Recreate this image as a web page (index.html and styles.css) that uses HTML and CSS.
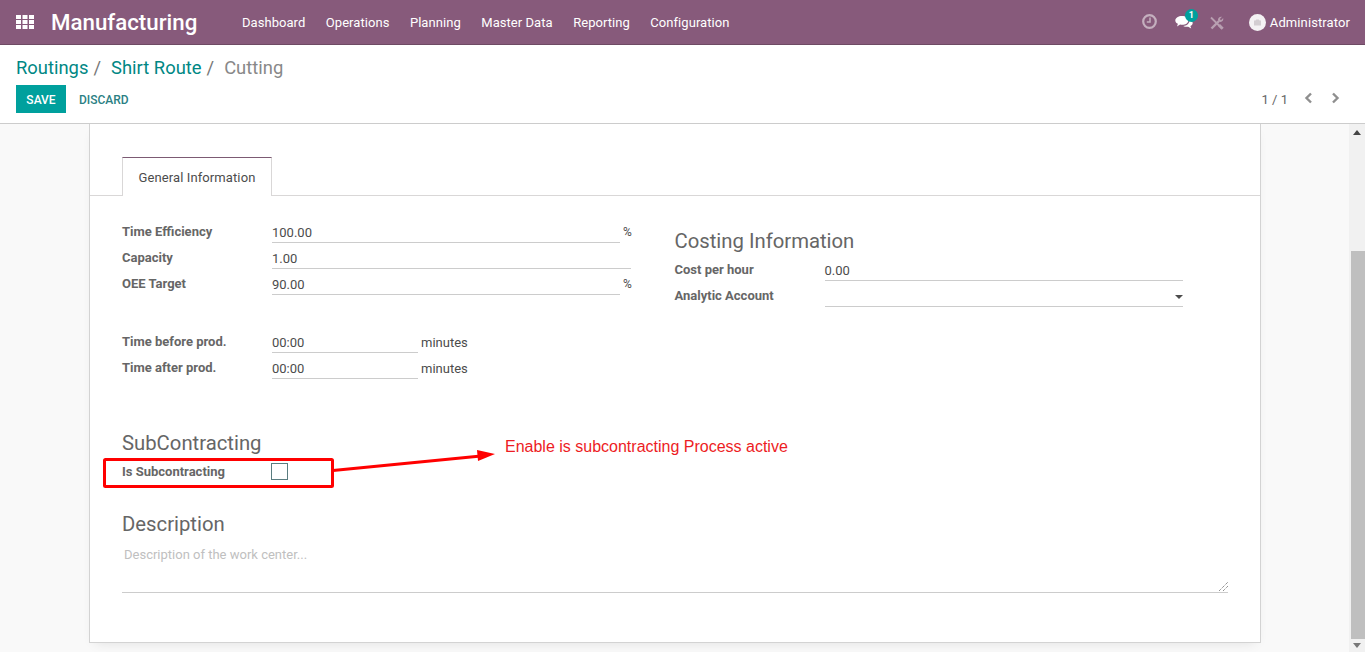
FILE: index.html
```html
<!DOCTYPE html>
<html>
<head>
<title>Cutting - Manufacturing</title>
<link rel="stylesheet" href="styles.css">
</head>
<body>
<nav class="topbar">
  <svg class="apps" width="18" height="14" viewBox="0 0 18 14"><path d="M0 0h5v4H0zM6.500 0h5v4h-5zM13 0h5v4h-5zM0 5h5v4H0zM6.500 5h5v4h-5zM13 5h5v4h-5zM0 10h5v4H0zM6.500 10h5v4h-5zM13 10h5v4h-5z"/></svg>
  <span class="brand">Manufacturing</span>
  <ul class="menu">
    <li>Dashboard</li>
    <li>Operations</li>
    <li>Planning</li>
    <li>Master Data</li>
    <li>Reporting</li>
    <li>Configuration</li>
  </ul>
  <div class="systray">
    <svg class="tray-clock" width="15" height="15" viewBox="0 0 15 15"><circle cx="7.500" cy="7.500" r="6.300" fill="none" stroke="#c4afbe" stroke-width="2.200"/><path d="M8 3.500v4.500H4.800" fill="none" stroke="#c4afbe" stroke-width="1.500"/></svg>
    <span class="tray-chat">
      <svg width="18" height="15" viewBox="0 0 18 15"><path d="M7 1c3.600 0 6.300 1.900 6.300 4.400S10.600 9.800 7 9.800c-.7 0-1.300 0-1.900-.2L2 11.500l.9-2.700C1.300 8 .3 6.800.3 5.400.3 2.900 3.400 1 7 1z" fill="#fff"/><path d="M14.500 4.500c1.900.7 3.200 2 3.200 3.500 0 1.300-.9 2.400-2.300 3.100l.8 2.400-3-1.700c-1.800.2-3.700-.1-5-.9 3.500 0 6.600-2.300 6.300-6.400z" fill="#fff"/></svg>
      <b class="badge">1</b>
    </span>
    <svg class="tray-tools" width="14" height="14" viewBox="0 0 14 14"><path d="M1.500 12.500 9 5" stroke="#b89fb1" stroke-width="2.400" fill="none"/><path d="M8 3.500C8.200 1.500 10 .3 12 .8L9.800 3l1.200 1.200 2.200-2.200c.5 2-.7 3.800-2.700 4-1.400.1-2.600-1.100-2.500-2.500z" fill="#b89fb1"/><path d="M1 1.500 12 12.500" stroke="#b89fb1" stroke-width="1.800" fill="none"/><path d="M8 10l2-2 3.700 3.700-2 2z" fill="#b89fb1"/></svg>
    <span class="user">
      <svg width="17" height="17" viewBox="0 0 17 17"><circle cx="8.500" cy="8.500" r="8.500" fill="#f4f1f3"/><path d="M5 6.500h1.500l.8-1h2.400l.8 1H12v5H5z" fill="#d3cdd1"/></svg>
      Administrator
    </span>
  </div>
</nav>

<header class="panel">
  <ol class="crumbs">
    <li><a>Routings</a><span class="sep">/</span></li>
    <li><a>Shirt Route</a><span class="sep">/</span></li>
    <li class="current">Cutting</li>
  </ol>
  <div class="panel-row">
    <button class="btn-save">SAVE</button>
    <button class="btn-discard">DISCARD</button>
    <div class="pager">
      <span class="pager-count">1 / 1</span>
      <svg width="9" height="12" viewBox="0 0 9 12"><path d="M7 1.500 2.500 6 7 10.500" fill="none" stroke="#8f8f8f" stroke-width="2.400"/></svg>
      <svg width="9" height="12" viewBox="0 0 9 12"><path d="M2 1.500 6.500 6 2 10.500" fill="none" stroke="#8f8f8f" stroke-width="2.400"/></svg>
    </div>
  </div>
</header>

<div class="content">
  <main class="scroller">
    <section class="sheet">
      <div class="tabs"><span class="tab">General Information</span></div>

      <div class="columns">
        <div>
          <div class="field"><label>Time Efficiency</label><span class="input short">100.00</span><span class="unit pct">%</span></div>
          <div class="field"><label>Capacity</label><span class="input wide">1.00</span></div>
          <div class="field"><label>OEE Target</label><span class="input short">90.00</span><span class="unit pct">%</span></div>
          <div class="field first-time"><label>Time before prod.</label><span class="input time">00:00</span><span class="unit">minutes</span></div>
          <div class="field"><label>Time after prod.</label><span class="input time">00:00</span><span class="unit">minutes</span></div>
        </div>
        <div>
          <h2 class="costing">Costing Information</h2>
          <div class="field"><label>Cost per hour</label><span class="input cost">0.00</span></div>
          <div class="field"><label>Analytic Account</label><span class="input cost select"><i class="caret"></i></span></div>
        </div>
      </div>

      <h2 class="subcontract">SubContracting</h2>
      <div class="field check-row"><label>Is Subcontracting</label><span class="checkbox"></span></div>

      <h2 class="describe">Description</h2>
      <div class="textarea">
        Description of the work center...
        <svg class="grip" width="9" height="9" viewBox="0 0 9 9"><path d="M0 9 9 0M4 9l5-5" stroke="#666" stroke-width="1" stroke-dasharray="1 1" fill="none"/></svg>
      </div>
    </section>

    <svg class="markup" width="400" height="50" viewBox="0 0 400 50">
      <rect x="1.500" y="6.500" width="228" height="27" rx="1" fill="none" stroke="#f00" stroke-width="3"/>
      <path d="M230 17.500 378 3" stroke="#f00" stroke-width="3" fill="none"/>
      <path d="M374 -3 392 1 375 8z" fill="#f00"/>
    </svg>
    <span class="note">Enable is subcontracting Process active</span>
  </main>
  <div class="scrollbar">
    <i class="arrow up"></i>
    <div class="track"><div class="thumb"></div></div>
    <i class="arrow down"></i>
  </div>
</div>
</body>
</html>
```

FILE: styles.css
```css
html, body { height: 100%; }
body { margin: 0; height: 652px; overflow: hidden; display: flex; flex-direction: column; font-family: Roboto, "Noto Sans", sans-serif; font-size: 13px; color: #4c4c4c; background: #fff; }

/* top bar */
.topbar { height: 44px; flex: none; display: flex; align-items: center; background: #875a7b; border-bottom: 1px solid #6e4a64; color: #fff; }
.apps { margin-left: 16px; fill: #fff; }
.brand { margin-left: 17px; font-size: 22.300px; font-weight: 500; width: 191px; }
.menu { display: flex; gap: 20.500px; margin: 0; padding: 0; list-style: none; font-size: 13px; letter-spacing: .05px; }
.systray { margin-left: auto; display: flex; align-items: center; padding-right: 15px; }
.tray-clock { margin: -2px 18px 0 0; }
.tray-chat { position: relative; display: flex; margin-right: 17px; }
.badge { position: absolute; top: -6px; left: 10px; width: 13px; height: 13px; border-radius: 50%; background: #00a09d; font-size: 9px; line-height: 13px; text-align: center; }
.tray-tools { margin-right: 25px; margin-top: 2px; }
.user { display: flex; align-items: center; gap: 4px; letter-spacing: .1px; }

/* control panel */
.panel { height: 78px; flex: none; padding: 0 16px; border-bottom: 1px solid #ccc; background: #fff; }
.crumbs { display: flex; margin: 0; padding: 12px 0 0; height: 28px; list-style: none; font-size: 18.400px; line-height: 22px; }
.crumbs a { color: #008784; }
.crumbs .sep { margin: 0 10px 0 5px; color: #777; }
.crumbs .current { color: #888; }
.panel-row { display: flex; align-items: center; }
.btn-save, .btn-discard { border: 0; height: 28px; padding-top: 3px; font-family: inherit; font-size: 12px; font-weight: 500; }
.btn-save { width: 50px; padding-left: 0; padding-right: 0; background: #00a09d; color: #fff; }
.btn-discard { margin-left: 1px; padding-left: 12px; padding-right: 12px; background: none; color: #2b7f84; }
.pager { margin-left: auto; margin-right: 9px; display: flex; align-items: center; gap: 18px; color: #666; }
.pager-count { margin-right: -2px; }
.pager svg { margin-top: -2px; }

/* content */
.content { flex: 1; min-height: 0; display: flex; background: #f9f9f9; }
.scroller { position: relative; flex: 1; padding: 0 88px 0 89px; }
.sheet { box-sizing: border-box; width: 1172px; height: 519px; padding-top: 33px; background: #fff; border: 1px solid #d3d3d3; border-top: 0; box-shadow: 0 5px 12px -6px rgba(0,0,0,.12); }

.tabs { height: 38px; padding-left: 32px; border-bottom: 1px solid #d9d7d7; }
.tab { box-sizing: border-box; display: block; width: 150px; height: 39px; padding-top: 12px; text-align: center; letter-spacing: .1px; background: #fff; border: 1px solid #d9d7d7; border-top-color: #7c5a73; border-bottom: 0; }

.columns { display: grid; grid-template-columns: 510px 509px; column-gap: 42.500px; margin: 21px 0 0 32px; }
.field { display: flex; height: 26px; }
.field label { width: 150px; flex: none; padding-top: 7px; font-weight: 700; color: #666; }
.input { box-sizing: border-box; display: block; height: 26px; padding-top: 8px; border-bottom: 1px solid #ccc; color: #4c4c4c; }
.short { width: 348px; }
.wide { width: 359px; }
.time { width: 146px; }
.cost { width: 358px; position: relative; }
.unit { padding: 8px 0 0 3px; }
.pct { font-size: 12px; }
.first-time { margin-top: 32px; }
.caret { position: absolute; right: 0; top: 14px; border: 4px solid transparent; border-top-color: #4c4c4c; border-bottom: 0; }

h2 { margin: 0; font-size: 20.300px; font-weight: 400; line-height: 24px; color: #666; }
.costing { margin: 12px 0 2px; }
.subcontract { margin: 52px 0 2px 32px; }
.check-row { margin-left: 32px; }
.checkbox { box-sizing: border-box; display: block; width: 17px; height: 17px; margin: 6px 0 0 -1px; border: 1px solid #5a7d80; background: #fff; }
.describe { margin: 29px 0 0 32px; }

.textarea { position: relative; box-sizing: border-box; width: 1106px; height: 57px; margin: 0 0 0 32px; padding: 11px 2px 0; border-bottom: 1px solid #ccc; color: #c0c0c0; }
.grip { position: absolute; right: 0; bottom: 1px; }

/* annotation drawn over the form */
.markup { position: absolute; left: 103px; top: 329px; overflow: visible; }
.note { position: absolute; left: 505px; top: 313px; font-family: "Liberation Sans", Arial, sans-serif; font-size: 16px; line-height: 20px; color: #ed1c24; }

/* scrollbar */
.scrollbar { width: 16px; flex: none; display: flex; flex-direction: column; align-items: center; background: #f1f1f1; }
.track { flex: 1; width: 100%; display: flex; flex-direction: column; justify-content: flex-end; }
.thumb { width: 14px; height: 388px; margin-left: 2px; background: #bfbfbf; }
.arrow { display: block; width: 0; height: 0; border: 4px solid transparent; }
.arrow.up { margin: 6px 0 4px; border-bottom: 5px solid #444; border-top: 0; }
.arrow.down { margin: 4px 0 4px; border-top: 5px solid #777; border-bottom: 0; }
```
